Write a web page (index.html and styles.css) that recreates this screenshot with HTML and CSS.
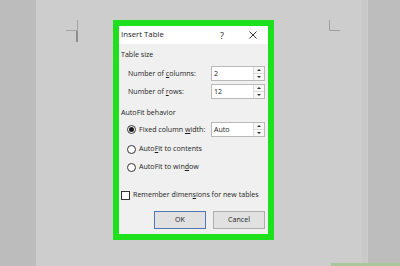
FILE: index.html
```html
<!DOCTYPE html>
<html>
<head>
<meta charset="utf-8">
<link rel="stylesheet" href="styles.css">
</head>
<body>
<div class="screen">
  <div class="side side-left"></div>
  <div class="page">
    <div class="mark mark-left"><span class="mh"></span><span class="mv"></span><span class="mv2"></span></div>
    <div class="mark mark-right"><span class="rv"></span><span class="rh"></span></div>
    <div class="highlight">
      <div class="dialog">
        <div class="titlebar">
          <span class="title">Insert Table</span>
          <span class="help">?</span>
          <span class="close">
            <svg width="8" height="8" viewBox="0 0 8 8"><path d="M0.5 0.5 L7.5 7.5 M7.5 0.5 L0.5 7.5" stroke="#222" stroke-width="0.9" fill="none"/></svg>
          </span>
        </div>
        <div class="body">
          <div class="label row-label">Table size</div>
          <div class="field first">
            <span class="flabel">Number of <u>c</u>olumns:</span>
            <div class="spin"><span class="val">2</span><div class="arrows"><span class="up"></span><span class="down"></span></div></div>
          </div>
          <div class="field second">
            <span class="flabel">Number of <u>r</u>ows:</span>
            <div class="spin"><span class="val">12</span><div class="arrows"><span class="up"></span><span class="down"></span></div></div>
          </div>
          <div class="label row-label2">AutoFit behavior</div>
          <div class="field radio-field">
            <span class="opt"><span class="radio checked"></span><span>Fixed column <u>w</u>idth:</span></span>
            <div class="spin"><span class="val">Auto</span><div class="arrows"><span class="up"></span><span class="down"></span></div></div>
          </div>
          <div class="opt opt2"><span class="radio"></span><span>Auto<u>F</u>it to contents</span></div>
          <div class="opt opt3"><span class="radio"></span><span>AutoFit to win<u>d</u>ow</span></div>
          <div class="check-row"><span class="checkbox"></span><span>Remember dimen<u>s</u>ions for new tables</span></div>
          <div class="buttons">
            <div class="btn ok">OK</div>
            <div class="btn">Cancel</div>
          </div>
        </div>
      </div>
    </div>
  </div>
  <div class="side side-right"><span class="edge"></span></div>
  <div class="wm"></div>
</div>
</body>
</html>
```
FILE: styles.css
```css
* { box-sizing: border-box; }
html, body { margin: 0; padding: 0; }
body {
  width: 400px;
  height: 266px;
  overflow: hidden;
  font-family: "Open Sans", "Noto Sans", sans-serif;
  color: #1c1c1c;
}
.screen {
  position: relative;
  display: flex;
  width: 400px;
  height: 266px;
  background: #bdbdbd;
}
.side-left { width: 36px; background: #bcbcbc; }
.side-right { width: 32px; background: #bdbdbd; position: relative; }
.side-right .edge {
  position: absolute; left: -6px; top: 0; width: 5px; height: 266px; background: #c9c9c9;
}
.page {
  position: relative;
  width: 332px;
  height: 266px;
  background: #cdcdcd;
  padding: 20px 0 0 77px;
}
.wm {
  position: absolute;
  left: 331px; top: 263px; width: 69px; height: 3px;
  background: #a9c69c;
}
.mark { position: absolute; }
.mark-left { left: 30px; top: 20px; width: 12px; height: 22px; }
.mark-left .mh { position: absolute; left: 0; top: 10px; width: 12px; height: 1px; background: #a4a4a4; }
.mark-left .mv { position: absolute; left: 11px; top: 0; width: 1px; height: 11px; background: #a4a4a4; }
.mark-left .mv2 { position: absolute; left: 10px; top: 11px; width: 2px; height: 11px; background: #8e8e8e; }
.mark-right { left: 293px; top: 20px; width: 12px; height: 11px; }
.mark-right .rv { position: absolute; left: 0; top: 0; width: 1px; height: 11px; background: #9f9f9f; }
.mark-right .rh { position: absolute; left: 0; top: 10px; width: 11px; height: 1px; background: #9f9f9f; }

.highlight {
  width: 161px;
  height: 220px;
  border: 6px solid #1fe01c;
}
.dialog {
  width: 149px;
  height: 208px;
  background: #f0f0f0;
  font-size: 7.1px;
  line-height: 1;
}
.titlebar {
  height: 18px;
  background: #fff;
  display: flex;
  align-items: center;
  padding-left: 2px;
}
.title { font-size: 7.8px; flex: 1; }
.help { font-size: 9px; width: 10px; margin-right: 19px; }
.close { width: 8px; height: 8px; margin-right: 11px; display: flex; }
.body { padding: 0 3px 0 2px; }
.label { height: 14px; display: flex; align-items: center; }
.row-label { margin-top: 4px; }
.field {
  display: flex;
  align-items: center;
  justify-content: space-between;
  height: 15px;
  padding-left: 7px;
}
.field.first { margin-top: 4px; }
.field.second { margin-top: 3px; }
.row-label2 { margin-top: 7px; }
.radio-field { margin-top: 2px; padding-left: 6px; }
.spin {
  width: 54px;
  height: 15px;
  background: #fff;
  border: 1px solid #b9b9b9;
  display: flex;
  align-items: center;
}
.val { flex: 1; padding-left: 2px; }
.arrows {
  width: 11px;
  height: 13px;
  display: flex;
  flex-direction: column;
  border-left: 1px solid #dcdcdc;
}
.arrows span {
  flex: 1;
  display: flex;
  align-items: center;
  justify-content: center;
  background: #f7f7f7;
}
.arrows .up { border-bottom: 1px solid #dcdcdc; }
.arrows .up::before {
  content: ""; border-left: 2px solid transparent; border-right: 2px solid transparent; border-bottom: 2px solid #333;
}
.arrows .down::before {
  content: ""; border-left: 2px solid transparent; border-right: 2px solid transparent; border-top: 2px solid #333;
}
.opt { display: flex; align-items: center; height: 14px; }
.opt2 { margin-top: 5px; padding-left: 6px; }
.opt3 { margin-top: 4px; padding-left: 6px; }
.radio {
  width: 9px; height: 9px;
  border: 1px solid #333;
  border-radius: 50%;
  background: #fff;
  margin-right: 3px;
  display: flex;
  align-items: center;
  justify-content: center;
  flex: none;
}
.radio.checked::before {
  content: ""; width: 5px; height: 5px; border-radius: 50%; background: #1a1a1a;
}
.check-row {
  display: flex; align-items: center; height: 14px; margin-top: 14px;
}
.checkbox {
  width: 9px; height: 9px; border: 1px solid #333; background: #fff; margin-right: 3px; flex: none;
}
.buttons {
  display: flex;
  justify-content: flex-end;
  gap: 7px;
  margin-top: 9px;
}
.btn {
  width: 52px;
  height: 18px;
  background: #e1e1e1;
  border: 1px solid #adadad;
  display: flex;
  align-items: center;
  justify-content: center;
}
.btn.ok { border-color: #4f77b6; }
u { text-decoration-thickness: 0.6px; text-underline-offset: 1px; }
```
